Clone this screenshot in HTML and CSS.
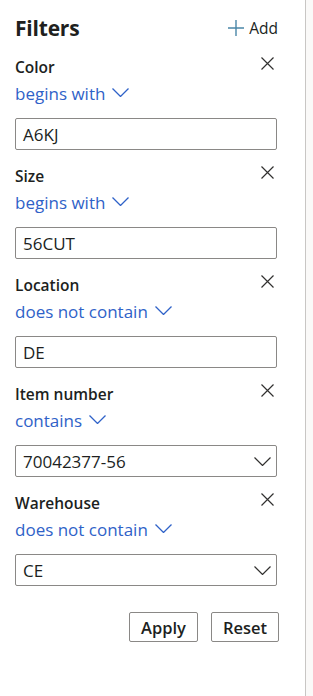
FILE: index.html
```html
<!DOCTYPE html>
<html lang="en">
<head>
    <meta charset="UTF-8">
    <meta name="viewport" content="width=device-width, initial-scale=1.0">
    <title>Filters</title>
    <link rel="stylesheet" href="styles.css">
</head>
<body>
    <div class="panel">
        <div class="panel-header">
            <h1>Filters</h1>
            <button class="add" type="button">
                <svg width="16" height="16" viewBox="0 0 16 16"><path d="M8 0v16M0 8h16" stroke="currentColor" stroke-width="1.4" fill="none"/></svg>
                <span>Add</span>
            </button>
        </div>

        <div class="filter">
            <div class="filter-head">
                <span class="filter-name">Color</span>
                <svg class="remove" width="13" height="13" viewBox="0 0 13 13"><path d="M0.5 0.5l12 12M12.5 0.5l-12 12" stroke="currentColor" stroke-width="1.2" fill="none"/></svg>
            </div>
            <div class="operator">begins with <svg width="17" height="9" viewBox="0 0 17 9"><path d="M0.5 0.5l8 8 8-8" stroke="currentColor" stroke-width="1.3" fill="none"/></svg></div>
            <div class="field">A6KJ</div>
        </div>

        <div class="filter">
            <div class="filter-head">
                <span class="filter-name">Size</span>
                <svg class="remove" width="13" height="13" viewBox="0 0 13 13"><path d="M0.5 0.5l12 12M12.5 0.5l-12 12" stroke="currentColor" stroke-width="1.2" fill="none"/></svg>
            </div>
            <div class="operator">begins with <svg width="17" height="9" viewBox="0 0 17 9"><path d="M0.5 0.5l8 8 8-8" stroke="currentColor" stroke-width="1.3" fill="none"/></svg></div>
            <div class="field">56CUT</div>
        </div>

        <div class="filter">
            <div class="filter-head">
                <span class="filter-name">Location</span>
                <svg class="remove" width="13" height="13" viewBox="0 0 13 13"><path d="M0.5 0.5l12 12M12.5 0.5l-12 12" stroke="currentColor" stroke-width="1.2" fill="none"/></svg>
            </div>
            <div class="operator">does not contain <svg width="17" height="9" viewBox="0 0 17 9"><path d="M0.5 0.5l8 8 8-8" stroke="currentColor" stroke-width="1.3" fill="none"/></svg></div>
            <div class="field">DE</div>
        </div>

        <div class="filter">
            <div class="filter-head">
                <span class="filter-name">Item number</span>
                <svg class="remove" width="13" height="13" viewBox="0 0 13 13"><path d="M0.5 0.5l12 12M12.5 0.5l-12 12" stroke="currentColor" stroke-width="1.2" fill="none"/></svg>
            </div>
            <div class="operator">contains <svg width="17" height="9" viewBox="0 0 17 9"><path d="M0.5 0.5l8 8 8-8" stroke="currentColor" stroke-width="1.3" fill="none"/></svg></div>
            <div class="field select">
                <span>70042377-56</span>
                <svg width="17" height="9" viewBox="0 0 17 9"><path d="M0.5 0.5l8 8 8-8" stroke="currentColor" stroke-width="1.2" fill="none"/></svg>
            </div>
        </div>

        <div class="filter">
            <div class="filter-head">
                <span class="filter-name">Warehouse</span>
                <svg class="remove" width="13" height="13" viewBox="0 0 13 13"><path d="M0.5 0.5l12 12M12.5 0.5l-12 12" stroke="currentColor" stroke-width="1.2" fill="none"/></svg>
            </div>
            <div class="operator">does not contain <svg width="17" height="9" viewBox="0 0 17 9"><path d="M0.5 0.5l8 8 8-8" stroke="currentColor" stroke-width="1.3" fill="none"/></svg></div>
            <div class="field select">
                <span>CE</span>
                <svg width="17" height="9" viewBox="0 0 17 9"><path d="M0.5 0.5l8 8 8-8" stroke="currentColor" stroke-width="1.2" fill="none"/></svg>
            </div>
        </div>

        <div class="actions">
            <button type="button" class="btn">Apply</button>
            <button type="button" class="btn">Reset</button>
        </div>
    </div>
</body>
</html>
```

FILE: styles.css
```css
body {
    margin: 0;
    font-family: 'Open Sans', sans-serif;
    background-color: #faf9f8;
    color: #201f1e;
}
.panel {
    width: 306px;
    height: 696px;
    box-sizing: border-box;
    background-color: white;
    border-right: 1px solid #c8c6c4;
    padding: 14px 28px 0 15px;
}
.panel-header {
    display: flex;
    justify-content: space-between;
    align-items: center;
    height: 28px;
}
h1 {
    margin: 0;
    font-size: 21px;
    font-weight: 700;
    letter-spacing: -0.2px;
}
.add {
    display: flex;
    align-items: center;
    gap: 5px;
    margin-right: -1px;
    padding: 0;
    border: none;
    background: none;
    font-family: 'Open Sans', sans-serif;
    font-size: 15.5px;
    color: #201f1e;
}
.add svg {
    color: #4a87a8;
}
.filter {
    padding-top: 14px;
}
.filter + .filter {
    padding-top: 15px;
}
.filter-head {
    display: flex;
    justify-content: space-between;
    align-items: center;
    height: 22px;
}
.filter-name {
    font-size: 15.5px;
    font-weight: 600;
}
.remove {
    color: #323130;
    margin-top: -8px;
    margin-right: 3px;
}
.operator {
    display: flex;
    align-items: center;
    gap: 7px;
    height: 26px;
    margin-top: 2px;
    font-size: 17px;
    color: #2f62c8;
}
.operator svg {
    margin-top: -2px;
}
.field {
    display: flex;
    align-items: center;
    justify-content: space-between;
    height: 32px;
    box-sizing: border-box;
    margin-top: 12px;
    padding: 0 5px 0 7px;
    border: 1px solid #8a8886;
    border-radius: 2px;
    font-size: 17px;
}
.field svg {
    color: #323130;
}
.actions {
    display: flex;
    justify-content: flex-end;
    gap: 13px;
    margin-top: 26px;
    margin-right: -2px;
}
.btn {
    height: 30px;
    padding: 0 11px;
    background-color: white;
    border: 1px solid #8a8886;
    border-radius: 2px;
    font-family: 'Open Sans', sans-serif;
    font-size: 16.5px;
    font-weight: 600;
    color: #201f1e;
}
```
